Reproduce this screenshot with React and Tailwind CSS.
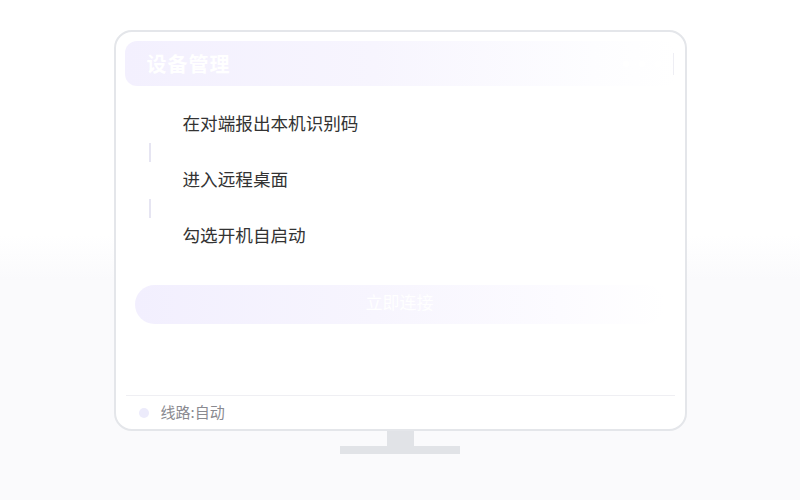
import React from 'react';

const steps = ['在对端报出本机识别码', '进入远程桌面', '勾选开机自启动'];

export default function App() {
  return (
    <div
      className="w-[800px] h-[500px] flex flex-col items-center pt-[30px] bg-[linear-gradient(to_bottom,#ffffff_0%,#ffffff_47%,#fafafc_56%,#fafafc_100%)]"
      style={{ fontFamily: '"Noto Sans CJK SC", "Noto Sans", sans-serif' }}
    >
      {/* monitor */}
      <div className="w-[573px] h-[401px] border-2 border-[#e4e6ea] rounded-[18px] bg-white flex flex-col px-[9px] pt-[9px]">
        {/* header */}
        <div className="h-[45px] rounded-[12px] flex items-center pl-[22px] pr-[2px] bg-[linear-gradient(to_right,#f3f0fe_0%,#f7f5fe_45%,#fdfdff_85%,#ffffff_100%)]">
          <span className="text-[20px] font-bold text-white tracking-[1px]">设备管理</span>
          <div className="ml-auto flex items-center gap-[10px] mr-[12px]">
            <span className="w-[6px] h-[6px] rounded-full bg-white" />
            <span className="w-[6px] h-[6px] rounded-full bg-white" />
            <span className="w-[6px] h-[6px] rounded-full bg-white" />
          </div>
          <div className="w-px h-[22px] bg-[#eeeef4]" />
        </div>

        {/* steps */}
        <div className="flex flex-col mt-[27px] pl-[24px]">
          {steps.map((s, i) => (
            <div key={s} className="flex flex-col">
              <div className="h-[24px] flex items-center pl-[34px] pb-[4px] text-[17.6px] text-[#333]">{s}</div>
              {i < steps.length - 1 && (
                <div className="h-[32px] pt-[6px]">
                  <div className="w-[2px] h-[19px] bg-[#e6e5f2]" />
                </div>
              )}
            </div>
          ))}
        </div>

        {/* button */}
        <div className="mt-[36px] ml-[10px] w-[530px] h-[39px] rounded-full flex items-center justify-center pb-[5px] bg-[linear-gradient(to_right,#f2effe_0%,#f7f5fe_45%,#fcfbff_80%,#ffffff_100%)]">
          <span className="text-[17px] text-white">立即连接</span>
        </div>

        {/* footer */}
        <div className="mt-auto border-t border-[#efeff3] h-[34px] flex items-center pl-[13px] mx-[1px]">
          <span className="w-[10px] h-[10px] rounded-full bg-[#ecebfb]" />
          <span className="ml-[12px] text-[15px] text-[#8a8a90]">线路:自动</span>
        </div>
      </div>

      {/* stand */}
      <div className="w-[27px] h-[15px] bg-[#e1e3e7]" />
      <div className="w-[120px] h-[8px] bg-[#e1e3e7]" />
    </div>
  );
}
